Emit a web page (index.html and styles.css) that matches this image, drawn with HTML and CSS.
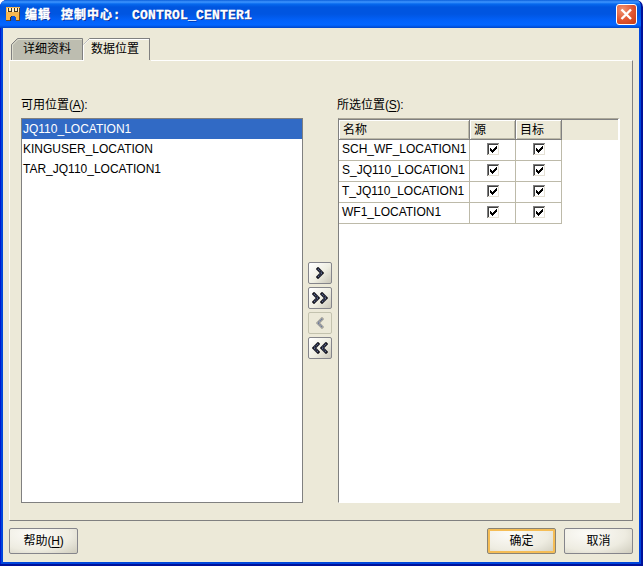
FILE: index.html
```html
<!DOCTYPE html>
<html lang="zh-CN">
<head>
<meta charset="utf-8">
<title>编辑 控制中心</title>
<link rel="stylesheet" href="styles.css">
</head>
<body>
<svg class="defs" width="0" height="0">
  <symbol id="chev" viewBox="0 0 8 12"><path d="M2 2L6 6L2 10" fill="none" stroke="currentColor" stroke-width="3.2" stroke-linecap="square"/><path class="core" d="M2 2L6 6L2 10" fill="none" stroke-width="1.3" stroke-dasharray="1 1"/></symbol>
  <symbol id="check" viewBox="0 0 12 12"><path d="M0 0H12V12H0Z" fill="#fff"/><path d="M0 0H12V1H1V12H0Z" fill="#808080"/><path d="M1 1H11V2H2V11H1Z" fill="#404040"/><path d="M11 1H12V12H1V11H11Z" fill="#e4e0d4"/><path d="M3 5H4V6H5V7H6V6H7V5H8V4H9V3H10V6H9V7H8V8H7V9H6V10H5V9H4V8H3Z" fill="#000"/></symbol>
</svg>
<div class="window">
  <header class="titlebar">
    <svg class="app-icon" width="14" height="14" viewBox="0 0 14 14"><path d="M0 0H14V14H0Z" fill="#f9b84e"/><path d="M1 1H13V5H1Z" fill="#fff0cb"/><path d="M2.500 1V4M5.500 1V4M8.500 1V4M11.500 1V4M2 4.500H6M8 4.500H12" stroke="#45351c" fill="none"/><path d="M5 14V10H6V9H9V10H10V14Z" fill="#0754dd"/><path d="M4 14V10H5V14ZM5 9H6V10H5Z" fill="#45351c"/><path d="M13 1H14V14H10V13H13ZM0 13H4V14H0Z" fill="#70481b"/></svg>
    <h1 class="title"><span class="title-cn">编辑</span><span class="title-cn">控制中心:</span><span class="title-en">CONTROL_CENTER1</span></h1>
    <button class="close"><svg width="21" height="21" viewBox="0 0 21 21"><path d="M5.500 5.500L15 15M15 5.500L5.500 15" stroke="#fff" stroke-width="2.400"/></svg></button>
  </header>
  <main class="content">
    <nav class="tabs">
      <div class="tab tab-off"><svg class="tab-shape" width="72" height="22"><path d="M.5 22V6.500L6.500 .5H71.500V22" fill="#bdbdb0" stroke="#808080"/><path d="M1.500 22V7L7 1.500H71" fill="none" stroke="#dedecf"/></svg><span>详细资料</span></div>
      <div class="tab tab-on"><svg class="tab-shape" width="68" height="24"><path d="M0 24V6L6 0H68V24Z" fill="#ece9d8"/><path d="M.5 6.500L6.500 .5H67" fill="none" stroke="#808080"/><path d="M.5 23V7L6 1.500H66" fill="none" stroke="#fff"/><path d="M66.500 1V22" stroke="#808080"/></svg><span>数据位置</span></div>
    </nav>
    <section class="pane">
      <div class="column">
        <div class="label">可用位置<span class="key">(<u>A</u>):</span></div>
        <ul class="list">
          <li class="selected">JQ110_LOCATION1</li>
          <li>KINGUSER_LOCATION</li>
          <li>TAR_JQ110_LOCATION1</li>
        </ul>
      </div>
      <div class="movers">
        <button class="move"><svg width="8" height="12"><use href="#chev"/></svg></button>
        <button class="move"><svg width="8" height="12"><use href="#chev"/></svg><svg width="8" height="12"><use href="#chev"/></svg></button>
        <button class="move disabled"><svg class="flip" width="8" height="12"><use href="#chev"/></svg></button>
        <button class="move"><svg class="flip" width="8" height="12"><use href="#chev"/></svg><svg class="flip" width="8" height="12"><use href="#chev"/></svg></button>
      </div>
      <div class="column">
        <div class="label">所选位置<span class="key">(<u>S</u>):</span></div>
        <div class="table">
          <div class="row head"><div>名称</div><div>源</div><div>目标</div></div>
          <div class="row"><div>SCH_WF_LOCATION1</div><div><svg width="12" height="12"><use href="#check"/></svg></div><div><svg width="12" height="12"><use href="#check"/></svg></div></div>
          <div class="row"><div>S_JQ110_LOCATION1</div><div><svg width="12" height="12"><use href="#check"/></svg></div><div><svg width="12" height="12"><use href="#check"/></svg></div></div>
          <div class="row"><div>T_JQ110_LOCATION1</div><div><svg width="12" height="12"><use href="#check"/></svg></div><div><svg width="12" height="12"><use href="#check"/></svg></div></div>
          <div class="row"><div>WF1_LOCATION1</div><div><svg width="12" height="12"><use href="#check"/></svg></div><div><svg width="12" height="12"><use href="#check"/></svg></div></div>
        </div>
      </div>
    </section>
    <footer class="actions">
      <button class="btn help">帮助<span class="key">(<u>H</u>)</span></button>
      <button class="btn primary">确定</button>
      <button class="btn">取消</button>
    </footer>
  </main>
</div>
</body>
</html>
```
FILE: styles.css
```css
* { box-sizing: border-box; }
body { margin: 0; background: #fff; color: #000; font: 12px/16px "Liberation Sans", "Noto Sans CJK SC", sans-serif; }
button { font: inherit; color: inherit; padding: 0; margin: 0; }
svg { display: block; flex: none; }
.defs { position: absolute; }
.window { width: 643px; height: 566px; display: flex; flex-direction: column; background: #0046dc; border-radius: 7px 7px 0 0; overflow: hidden; border-right: 2px solid #00119a; border-bottom: 2px solid #00119a; box-shadow: inset 1px 0 #0019cf; }
.titlebar { height: 28px; flex: none; display: flex; align-items: center; padding: 0 4px 0 6px; background: linear-gradient(#0a5fdb 0, #3f96ff 2px, #0669ee 4px, #0055df 7px, #0055e1 14px, #0262fb 21px, #0366ff 25px, #0045c8 28px); }
.title { margin: 3px 0 0 5px; display: flex; color: #fff; font: bold 12px/18px "Liberation Mono", "Noto Sans CJK SC", monospace; text-shadow: 1px 1px #00258f; letter-spacing: 1px; }
.title-cn { margin-right: 10px; -webkit-text-stroke: .4px #fff; }
.title-cn + .title-cn { width: 71px; margin-right: 0; white-space: nowrap; }
.title-en { font-size: 13px; letter-spacing: .2px; font-family: "Liberation Mono", monospace; -webkit-text-stroke: .3px #fff; }
.close { margin-left: auto; width: 21px; height: 21px; border: 1px solid #fff; border-radius: 3px; background: radial-gradient(circle at 30% 25%, #f09473, #df532f 55%, #c43b15); }
.close svg { margin: -1px; }
.content { margin: 0 2px 0 3px; height: 534px; flex: none; background: #ece9d8; display: flex; flex-direction: column; }
.tabs { display: flex; height: 32px; padding: 10px 0 0 8px; flex: none; }
.tab { position: relative; height: 22px; width: 72px; padding: 3px 0 0 12px; }
.tab-on { width: 68px; padding-left: 8px; z-index: 1; }
.tab-shape { position: absolute; left: 0; top: 0; }
.tab span { position: relative; white-space: nowrap; }
.pane { width: 624px; height: 461px; flex: none; margin-left: 6px; padding: 36px 0 17px 11px; display: flex; border: 1px solid; border-color: #fff #808080 #808080 #fff; }
.column { width: 283px; flex: none; }
.label { height: 21px; white-space: nowrap; }
.key { letter-spacing: -.3px; }
u { text-underline-offset: 2px; text-decoration-thickness: 1px; }
.list { list-style: none; margin: 0; padding: 0; width: 282px; height: 385px; background: #fff; border: 1px solid #808080; }
.list li { height: 20px; line-height: 20px; padding-left: 1px; white-space: nowrap; }
.list .selected { color: #fff; background: #316ac5; }
.movers { width: 33px; flex: none; padding: 165px 0 0 4px; display: flex; flex-direction: column; gap: 3px; }
.move { width: 24px; height: 22px; display: flex; align-items: center; justify-content: center; border: 1px solid #85858b; border-radius: 2px; color: #171721; background: linear-gradient(135deg, #fff 5%, #efeee2 55%, #c9c6b9); }
.core { stroke: #6474a0; }
.disabled { color: #a7a69f; border-color: #c3c2ae; background: #ece9d8; }
.disabled .core { stroke: #a7a69f; }
.flip { transform: scaleX(-1); }
.table { width: 282px; height: 385px; background: #fff; border: solid; border-width: 1px 2px 1px 1px; border-color: #aca899 #fff #fff #808080; margin-left: 1px; }
.row { height: 21px; display: grid; grid-template-columns: 131px 46px 46px; }
.row > div { display: flex; align-items: center; justify-content: center; padding-bottom: 2px; border-right: 1px solid #bdbaa9; border-bottom: 1px solid #bdbaa9; }
.row > div:first-child { justify-content: flex-start; padding: 0 0 2px 3px; white-space: nowrap; }
.head { background: #ece9d8; border-top: 1px solid #808080; }
.head > div, .head > div:first-child { justify-content: flex-start; padding: 1px 0 0 4px; border-color: #808080; box-shadow: inset 1px 1px #fff, inset -1px -1px #bdbaa9; }
.actions { display: flex; padding: 7px 0 0 6px; }
.btn { width: 69px; height: 26px; border: 1px solid #85858b; border-radius: 2px; background: radial-gradient(ellipse at 35% 20%, #fcfbf8, #eeece1 60%, #c7c4b4 110%); }
.primary { margin-left: auto; margin-right: 8px; border-color: #8b8473; box-shadow: inset 0 0 0 2px #f5bd55; }
.btn:last-child { margin-right: 6px; }
```
